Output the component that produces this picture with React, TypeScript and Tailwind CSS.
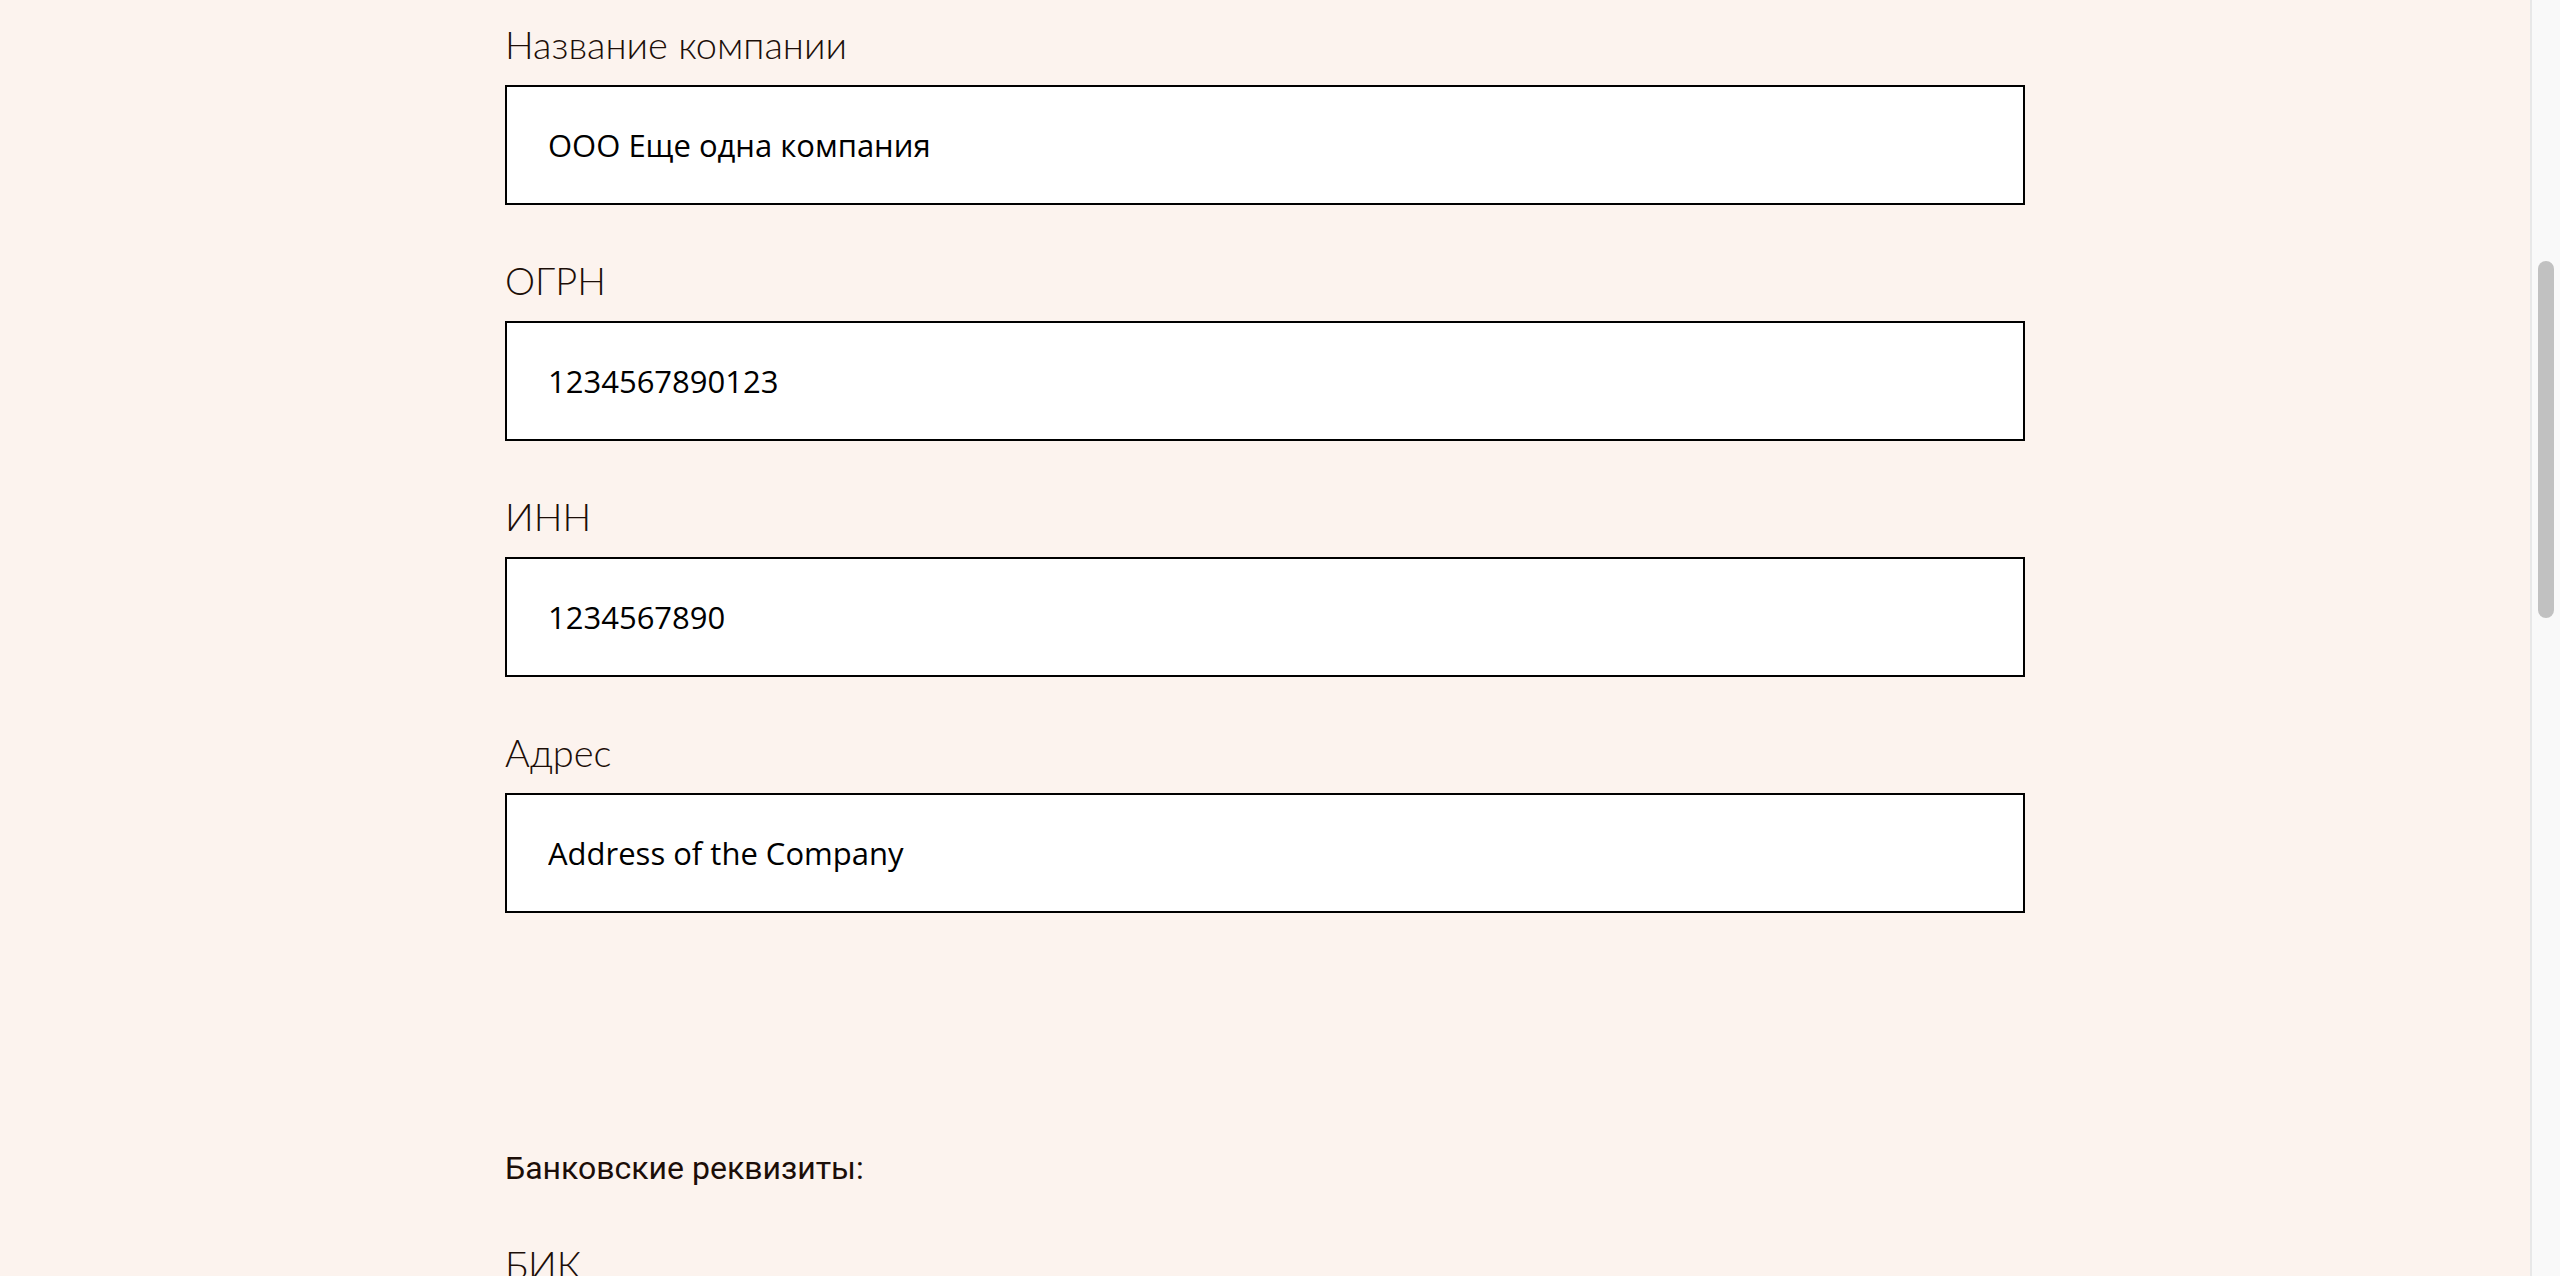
import React from 'react'

const fields = [
    { label: 'Название компании', value: 'ООО Еще одна компания' },
    { label: 'ОГРН', value: '1234567890123' },
    { label: 'ИНН', value: '1234567890' },
    { label: 'Адрес', value: 'Address of the Company' },
]

function Field({ label, value }: { label: string, value: string }) {
    return (
        <div className="flex flex-col">
            <label className="text-[38px] leading-[46px] text-[#1c0e08] font-['Lato',sans-serif] font-light mb-[18px]">
                {label}
            </label>
            <input
                readOnly
                defaultValue={value}
                className="h-[120px] w-full border-2 border-black bg-white pl-[41px] text-[31px] text-black font-['Open_Sans',sans-serif] font-normal outline-none"
            />
        </div>
    )
}

export default function App() {
    return (
        <div className="flex h-screen w-full overflow-hidden bg-[#fcf3ee]">
            <main className="flex-1 overflow-hidden">
                <div className="mx-auto w-[1520px] pt-[21px]">
                    <div className="flex flex-col gap-[52px]">
                        {fields.map((f) => (
                            <Field key={f.label} label={f.label} value={f.value} />
                        ))}
                    </div>

                    <h3 className="mt-[237px] text-[32px] leading-[36px] text-[#1c0e08] font-['Roboto',sans-serif]">
                        Банковские реквизиты:
                    </h3>

                    <div className="mt-[55px]">
                        <Field label="БИК" value="" />
                    </div>
                </div>
            </main>

            {/* scrollbar */}
            <div className="w-[30px] h-full bg-[#f9f9f9] border-l-2 border-[#e8e8e8] pt-[261px] pl-[6px]">
                <div className="w-[16px] h-[357px] rounded-full bg-[#c1c1c1]" />
            </div>
        </div>
    )
}
